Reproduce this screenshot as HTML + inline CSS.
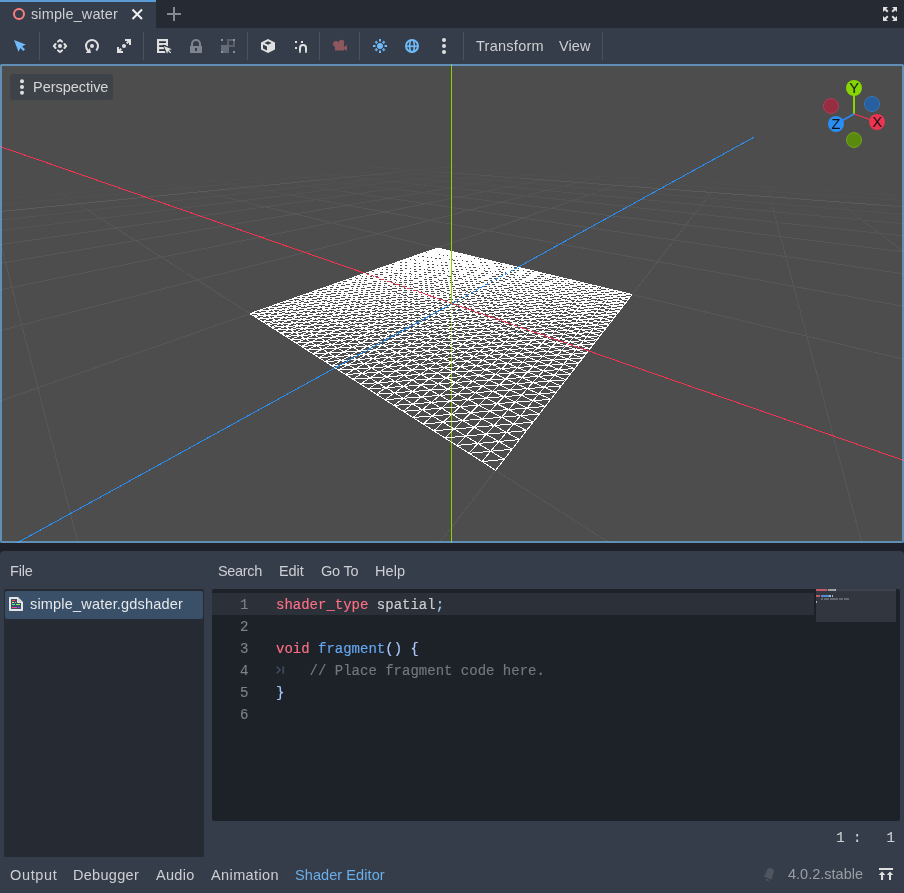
<!DOCTYPE html>
<html><head><meta charset="utf-8">
<style>
html,body{margin:0;padding:0;}
body{width:904px;height:893px;overflow:hidden;background:#1f222a;position:relative;font-family:"Liberation Sans",sans-serif;font-size:15px;color:#cdcfd2;}
.abs{position:absolute;}
.t{position:absolute;will-change:transform;white-space:nowrap;line-height:20px;height:20px;}
#tabbar{left:0;top:0;width:904px;height:28px;background:#252a33;}
#tab{left:0;top:0;width:156px;height:28px;background:#363d4a;border-top:2px solid #5b9bd6;box-sizing:border-box;}
#toolbar{left:0;top:28px;width:904px;height:36px;background:#363d4a;}
.sep{position:absolute;top:32px;width:1px;height:28px;background:#4b515d;}
#vp{left:0;top:64px;width:904px;height:479px;background:#4d4d4d;overflow:hidden;}
#vpborder{left:0;top:64px;width:904px;height:479px;box-sizing:border-box;border:2px solid rgba(112,186,250,0.6);border-radius:2px;}
#split{left:0;top:543px;width:904px;height:8px;background:#1f222a;}
#bottom{left:0;top:551px;width:904px;height:342px;background:#363d4a;border-radius:4px 4px 0 0;}
#flist{left:4px;top:589px;width:200px;height:268px;background:#252a33;border-radius:2px;}
#fsel{left:5px;top:591px;width:198px;height:28px;background:#3a5069;border-radius:2px;}
#code{left:212px;top:589px;width:688px;height:232px;background:#1d2229;border-radius:2px;overflow:hidden;}
#curline{left:212px;top:593px;width:602px;height:22px;background:#2c3039;}
#minimap{left:816px;top:589px;width:80px;height:33px;background:#32363e;}
.mono{-webkit-text-stroke:0.15px;will-change:transform;position:absolute;left:0;top:0;width:904px;height:893px;font-family:"Liberation Mono",monospace;font-size:14px;}
.ln{position:absolute;left:212.5px;width:36px;text-align:right;color:#7d8187;line-height:22px;height:22px;}
.cl{position:absolute;left:276px;line-height:22px;height:22px;white-space:pre;color:#cdcfd2;}
.kw{color:#ff7085;}
.fn{color:#66a8f0;}
.sym{color:#abc9ff;}
.cm{color:#75787d;}
</style></head><body>
<div id="tabbar" class="abs"></div>
<div id="tab" class="abs"></div>
<svg class="abs" style="left:11px;top:6px" width="16" height="16" viewBox="0 0 16 16"><circle cx="8" cy="8" r="5" fill="none" stroke="#fc7f7f" stroke-width="2"/></svg>
<svg class="abs" style="left:129px;top:6px" width="16" height="16" viewBox="0 0 16 16"><path d="M3.5 3.5l9.5 9.5M13 3.5l-9.500 9.500" fill="none" stroke="#f0f0f1" stroke-width="2"/></svg>
<svg class="abs" style="left:166px;top:6px" width="16" height="16" viewBox="0 0 16 16"><path d="M8 1v14M1 8h14" fill="none" stroke="#87898e" stroke-width="2"/></svg>
<svg class="abs" style="left:882px;top:6px" width="16" height="16" viewBox="0 0 16 16"><path fill="#e0e0e0" d="M1 1v5l1.793-1.793L5.086 6.500 6.500 5.086 4.207 2.793 6 1zm9 0 1.793 1.793L9.500 5.086 10.914 6.500l2.293-2.293L15 6V1zM5.086 9.500l-2.293 2.293L1 10v5h5l-1.793-1.793L6.500 10.914zm5.828 0L9.500 10.914l2.293 2.293L10 15h5v-5l-1.793 1.793z"/></svg>

<div id="toolbar" class="abs"></div>
<div class="sep" style="left:39px"></div>
<div class="sep" style="left:143px"></div>
<div class="sep" style="left:247px"></div>
<div class="sep" style="left:319px"></div>
<div class="sep" style="left:359px"></div>
<div class="sep" style="left:463px"></div>
<div class="sep" style="left:602px"></div>
<!-- select -->
<svg class="abs" style="left:12px;top:38px" width="16" height="16" viewBox="0 0 16 16"><path fill="#70bafa" d="M2 2L13.700 6.500 10.100 8.400 13 11.300 11.300 13 8.400 10.100 6.500 13.700z"/></svg>
<!-- move -->
<svg class="abs" style="left:52px;top:38px" width="16" height="16" viewBox="0 0 16 16"><path fill="none" stroke="#e0e0e0" stroke-width="2" stroke-linecap="round" stroke-linejoin="round" d="M6 3.600L8 1.900 10 3.600M6 12.400L8 14.100 10 12.400M3.600 6L1.900 8 3.600 10M12.400 6L14.100 8 12.400 10"/><circle cx="8" cy="8" r="2.100" fill="#e0e0e0"/></svg>
<!-- rotate -->
<svg class="abs" style="left:84px;top:38px" width="16" height="16" viewBox="0 0 16 16"><path fill="none" stroke="#e0e0e0" stroke-width="2" stroke-linecap="round" d="M12.660 11.780A6 6 0 1 0 3.760 12.240"/><path fill="#e0e0e0" d="M1.700 15h5.300l-1.100-5z"/><circle cx="8" cy="8" r="2" fill="#e0e0e0"/></svg>
<!-- scale -->
<svg class="abs" style="left:116px;top:38px" width="16" height="16" viewBox="0 0 16 16"><path fill="#e0e0e0" d="M9 1v2h2.586L10 4.586 11.414 6 13 4.414V7h2V1zM4.586 10L3 11.586V9H1v6h6v-2H4.414L6 11.414z"/><circle cx="8" cy="8" r="2" fill="#e0e0e0"/></svg>
<!-- list select -->
<svg class="abs" style="left:156px;top:38px" width="16" height="16" viewBox="0 0 16 16"><path fill="#e0e0e0" d="M1 1H12V8.300L6.600 6.500 9.500 15H1z"/><path fill="#272d39" d="M3.100 3.200h6.800v1.700H3.100zM3.100 7.200h6.900v1.700H3.100zM3.100 11.200h6.900v1.700H3.100z"/><path fill="#e0e0e0" d="M7.800 8L15.900 11.300 12.900 12.100 15.200 14.400 14.300 15.300 12 13 11.200 15.800z"/></svg>
<!-- lock -->
<svg class="abs" style="left:188px;top:38px" width="16" height="16" viewBox="0 0 16 16"><path fill="#7f848e" d="M8 1a5 5 0 0 0-5 5v2H2v7h12V8h-1V6a5 5 0 0 0-5-5zm0 2a3 3 0 0 1 3 3v2H5V6a3 3 0 0 1 3-3zM7 10h2v3H7z"/></svg>
<!-- group -->
<svg class="abs" style="left:220px;top:38px" width="16" height="16" viewBox="0 0 16 16"><g fill="#666b75"><path d="M1 7h8v8H1z"/><path d="M7 1v6h2V3h4v4H9v2h6V1z" fill="#5b606b"/></g><g fill="#8c9099"><path d="M1 1h2v2H1zM13 1h2v2h-2zM1 13h2v2H1zM13 13h2v2h-2z"/></g></svg>
<!-- cube -->
<svg class="abs" style="left:260px;top:38px" width="16" height="16" viewBox="0 0 16 16"><path fill="#e0e0e0" d="M8 1L1 4.500v7L8 15l7-3.500v-7zM8 3.200l3.600 1.800L8 6.800 4.400 5zM3 6.500l4 2v4l-4-2z"/></svg>
<!-- snap -->
<svg class="abs" style="left:292px;top:38px" width="16" height="16" viewBox="0 0 16 16"><g fill="#e0e0e0"><path d="M3 3h2v2H3zM9 3h2v2H9zM3 9h2v2H3z"/><path d="M7 15v-5a4 4 0 0 1 8 0v5h-2v-5a2 2 0 0 0-4 0v5z"/></g><path fill="#a8acb3" d="M7 13.500h2V15H7zM13 13.500h2V15h-2z"/></svg>
<!-- camera -->
<svg class="abs" style="left:332px;top:38px" width="16" height="16" viewBox="0 0 16 16"><g fill="#8c575d"><circle cx="4" cy="6" r="3"/><circle cx="9.500" cy="4.500" r="2.700"/><path d="M3 6h9v6.500H3z"/><path d="M11.500 9.300L15 7v6l-3.500-2.300z"/></g></svg>
<!-- sun -->
<svg class="abs" style="left:372px;top:38px" width="16" height="16" viewBox="0 0 16 16"><g fill="#70bafa"><circle cx="8" cy="8" r="3"/><path d="M7 1h2v2.500H7zM7 12.500h2V15H7zM1 7h2.500v2H1zM12.500 7H15v2h-2.500z"/><path d="M4.300 2.800l.4 1.100 1.100.4-1.100.4-.4 1.100-.4-1.100-1.100-.4 1.100-.4zM11.700 2.800l.4 1.100 1.100.4-1.100.4-.4 1.100-.4-1.100-1.100-.4 1.100-.4zM4.300 10.200l.4 1.100 1.100.4-1.100.4-.4 1.100-.4-1.100-1.100-.4 1.100-.4zM11.700 10.200l.4 1.100 1.100.4-1.100.4-.4 1.100-.4-1.100-1.100-.4 1.100-.4z" stroke="#70bafa" stroke-width=".6"/></g></svg>
<!-- globe -->
<svg class="abs" style="left:404px;top:38px" width="16" height="16" viewBox="0 0 16 16"><g fill="none" stroke="#70bafa"><circle cx="8" cy="8" r="6" stroke-width="2"/><ellipse cx="8" cy="8" rx="2.300" ry="6" stroke-width="1.700"/><path d="M2 8.300h12" stroke-width="1.700"/></g></svg>
<!-- dots -->
<svg class="abs" style="left:436px;top:38px" width="16" height="16" viewBox="0 0 16 16"><g fill="#e0e0e0"><circle cx="8" cy="2" r="2"/><circle cx="8" cy="8" r="2"/><circle cx="8" cy="14" r="2"/></g></svg>

<div id="vp" class="abs">
<svg width="904" height="479" viewBox="0 0 904 479" style="position:absolute;left:0;top:0" shape-rendering="crispEdges" fill="none" stroke-width="1">
<path stroke="rgb(97,97,97)" stroke-opacity="0.056" d="M132.2 111.1L122.1 111.8L111.7 112.4L101 113L89.9 113.7L78.4 114.4L66.5 115.1L54.2 115.9L41.4 116.7L28.2 117.5L14.4 118.3L0.1 119.2L-2 119.3M250.4 106L243.4 106.5L236.2 106.9L228.7 107.4L221.1 107.9L213.2 108.4L205.1 109L196.7 109.5L188.1 110.1L179.2 110.6L170 111.2L160.5 111.9L150.8 112.5L140.6 113.2L130.2 113.8L119.4 114.5L108.1 115.3L96.5 116L84.5 116.8L72 117.6L59.1 118.5L45.6 119.4L31.6 120.3L17.1 121.2L1.9 122.2L-2 122.5M579.9 103.7L586.1 104L592.4 104.3L598.9 104.6L605.5 104.9L612.3 105.3L619.2 105.6L626.3 106L633.5 106.3L640.9 106.7L648.4 107.1L656.1 107.5L664 107.9L672.1 108.3L680.4 108.7L688.8 109.1L697.5 109.6L706.4 110L715.5 110.5L724.8 110.9L734.4 111.4L744.2 111.9L754.3 112.4L764.6 112.9L775.3 113.5L786.2 114L797.4 114.6L808.9 115.2L820.8 115.8L833 116.4L845.5 117L858.4 117.6L871.7 118.3L885.5 119L899.6 119.7L906 120M313.8 104L308.1 104.4L302.2 104.8L296.1 105.2L289.8 105.6L283.4 106.1L276.9 106.5L270.1 107L263.1 107.5L255.9 108L248.6 108.5L241 109.1L233.1 109.6L225 110.2L216.7 110.8L208.1 111.4L199.2 112L190 112.6L180.5 113.3L170.7 114L160.6 114.7L150.1 115.4L139.2 116.2L127.9 117L116.2 117.8L104 118.6L91.4 119.5L78.2 120.4L64.6 121.4L50.3 122.4L35.5 123.4L20.1 124.5L3.9 125.6L-2 126M518 102.5L523.4 102.8L528.9 103.1L534.4 103.4L540.1 103.7L546 104L551.9 104.3L558 104.6L564.1 105L570.5 105.3L576.9 105.6L583.5 106L590.3 106.4L597.2 106.7L604.2 107.1L611.4 107.5L618.8 107.9L626.4 108.3L634.1 108.7L642 109.1L650.1 109.6L658.4 110L667 110.5L675.7 111L684.6 111.4L693.8 111.9L703.2 112.4L712.9 113L722.8 113.5L733.1 114L743.5 114.6L754.3 115.2L765.4 115.8L776.8 116.4L788.5 117L800.6 117.7L813.1 118.3L825.9 119L839.1 119.7L852.8 120.5L866.8 121.2L881.4 122L896.4 122.8L906 123.3M360.2 102.9L355.2 103.3L350.1 103.6L344.9 104L339.6 104.4L334 104.9L328.4 105.3L322.6 105.7L316.6 106.2L310.5 106.6L304.2 107.1L297.7 107.6L291 108.1L284.1 108.6L277 109.2L269.7 109.7L262.2 110.3L254.4 110.9L246.4 111.5L238.1 112.1L229.5 112.7L220.7 113.4L211.5 114.1L202.1 114.8L192.2 115.5L182.1 116.3L171.5 117.1L160.6 117.9L149.3 118.8M470.1 101.9L474.9 102.2L479.8 102.5L484.8 102.8L489.9 103.1L495.1 103.4L500.4 103.7L505.8 104L511.3 104.3L517 104.6L522.7 105L528.6 105.3L534.6 105.7L540.8 106L547 106.4L553.5 106.7L560 107.1L566.7 107.5L573.6 107.9L580.6 108.3L587.8 108.7L595.2 109.2L602.7 109.6L610.5 110L618.4 110.5L626.5 111L634.8 111.4L643.4 111.9L652.1 112.4L661.1 113L670.4 113.5L679.9 114.1L689.6 114.6L699.7 115.2L710 115.8L720.6 116.4L731.5 117L742.7 117.7L754.3 118.4L766.3 119L778.6 119.8L791.3 120.5L804.4 121.3L817.9 122L831.9 122.8L846.3 123.7L861.3 124.5L876.7 125.4L892.7 126.4L906 127.1M399.2 102.2L394.8 102.6L390.3 102.9L385.7 103.3L381 103.7L376.2 104.1L371.2 104.5L366.1 104.9L360.9 105.4L355.5 105.8L349.9 106.2L344.3 106.7L338.4 107.2L332.4 107.7L326.2 108.2L319.8 108.7L313.3 109.2L306.5 109.8L299.5 110.4L292.3 111L284.9 111.6L277.2 112.2M432.6 101.9L437.1 102.2L441.6 102.5L446.2 102.8L450.9 103.1L455.7 103.4L460.6 103.7L465.6 104L470.7 104.3L476 104.6L481.3 105L486.7 105.3L492.3 105.7L498 106L503.8 106.4L509.7 106.8L515.8 107.1L522 107.5L528.3 107.9L534.8 108.3L541.5 108.7L548.3 109.2L555.3 109.6L562.4 110.1M432.6 101.9L428.7 102.3L424.7 102.6L420.5 103L416.3 103.4L412 103.8L407.5 104.2L403 104.6L398.3 105L393.5 105.4L388.5 105.9L383.4 106.3L378.2 106.8L372.8 107.3L367.3 107.8L361.6 108.3L355.8 108.8L349.7 109.3L343.5 109.9M399.2 102.2L403.3 102.5L407.6 102.8L411.9 103.1L416.3 103.4L420.8 103.7L425.4 104L430.1 104.3L434.9 104.7L439.8 105L444.8 105.3L449.9 105.7L455.1 106L460.5 106.4L465.9 106.8L471.5 107.1L477.2 107.5L483 107.9L489 108.3L495.1 108.8M491.3 102.1L488.1 102.4L484.8 102.8L481.4 103.1L478 103.5L474.4 103.9L470.7 104.3L467 104.7L463.1 105.2L459.2 105.6L455.1 106L450.9 106.5L446.6 107L442.2 107.5L437.7 108L433 108.5M337.4 103.4L341.1 103.7L344.9 104L348.8 104.4L352.7 104.7L356.7 105L360.9 105.4L365.1 105.7L369.3 106.1L373.7 106.4L378.2 106.8L382.8 107.2L387.5 107.6L392.3 108L397.2 108.4L402.2 108.8M518 102.5L515.1 102.8L512.1 103.2L509 103.6L505.8 104L502.6 104.4L499.2 104.8L495.8 105.2L492.3 105.7L488.7 106.1L484.9 106.6L481.1 107.1L477.2 107.5L473.1 108L469 108.6M304.6 104L308.1 104.4L311.6 104.7L315.2 105L318.8 105.4L322.6 105.7L326.4 106.1L330.3 106.4L334.3 106.8L338.4 107.2L342.6 107.6L346.9 108L351.3 108.4L355.8 108.8L360.4 109.2L365.1 109.7M545.5 102.9L542.8 103.3L540.1 103.7L537.4 104.1L534.5 104.5L531.6 104.9L528.6 105.3L525.5 105.7L522.4 106.2L519.1 106.7L515.8 107.1L512.3 107.6L508.8 108.1L505.1 108.7M273.6 105L276.8 105.4L280.1 105.7L283.4 106.1L286.9 106.5L290.4 106.8L294 107.2L297.7 107.6L301.4 108L305.3 108.4L309.2 108.8L313.3 109.2L317.4 109.7L321.6 110.1L326 110.6M573.8 103.3L571.4 103.7L569.1 104.1L566.6 104.5L564.1 105L561.6 105.4L558.9 105.8L556.2 106.3L553.5 106.7L550.6 107.2L547.6 107.7L544.6 108.2L541.5 108.7L538.3 109.3M240.4 106.1L243.4 106.5L246.4 106.8L249.5 107.2L252.7 107.6L255.9 108L259.3 108.4L262.7 108.8L266.1 109.3L269.7 109.7L273.4 110.2L277.1 110.6L280.9 111.1L284.9 111.6M600.9 104.2L598.9 104.6L596.8 105L594.7 105.5L592.5 105.9L590.3 106.4L588 106.8L585.6 107.3L583.1 107.8L580.6 108.3L578 108.8L575.3 109.4L572.6 109.9L569.8 110.5M207.7 107.6L210.4 108L213.2 108.4L216.1 108.9L219 109.3L222 109.7L225 110.2L228.2 110.6L231.4 111.1L234.7 111.6L238.1 112.1L241.6 112.6L245.1 113.1L248.8 113.7M629.7 105.1L628 105.5L626.3 106L624.5 106.4L622.6 106.9L620.8 107.4L618.8 107.9L616.8 108.4L614.8 108.9L612.6 109.5L610.5 110L608.2 110.6L605.9 111.2M171.8 109.3L174.2 109.7L176.7 110.2L179.2 110.6L181.8 111.1L184.5 111.6L187.2 112.1L190 112.6L192.9 113.1L195.9 113.7L198.9 114.2L202.1 114.8L205.3 115.4M660.2 106.1L658.9 106.5L657.5 107L656.1 107.5L654.7 108L653.2 108.5L651.7 109L650.1 109.6L648.5 110.1L646.9 110.7L645.1 111.3L643.4 111.9L641.5 112.6M132.2 111.1L134.2 111.6L136.3 112.1L138.4 112.6L140.6 113.2L142.9 113.7L145.2 114.3L147.6 114.8L150.1 115.4L152.6 116L155.2 116.6L157.9 117.3L160.6 117.9M726.2 109.2L725.7 109.8L725.3 110.3L724.8 110.9L724.4 111.5L723.9 112.2L723.4 112.8L722.8 113.5L722.3 114.2L721.8 114.9L721.2 115.6L720.6 116.4M40.4 116.1L41.4 116.7L42.4 117.3L43.4 118L44.5 118.7L45.6 119.4L46.7 120.1L47.9 120.8L49.1 121.6L50.3 122.4L51.6 123.2L53 124L54.3 124.9M764.1 111L764.3 111.7L764.5 112.3L764.6 112.9L764.8 113.6L765 114.3L765.2 115L765.4 115.8L765.6 116.5L765.8 117.4L766 118.2L766.3 119M806.2 113.1L807.1 113.7L808 114.4L808.9 115.2L809.9 115.9L810.9 116.7L812 117.5L813.1 118.3L814.2 119.2L815.4 120.1L816.6 121.1L817.9 122L819.2 123.1M852.9 115.3L854.7 116L856.5 116.8L858.4 117.6L860.4 118.5L862.5 119.4L864.6 120.3L866.8 121.2L869.2 122.2L871.6 123.2L874.1 124.3L876.7 125.4L879.5 126.6"/>
<path stroke="rgb(97,97,97)" stroke-opacity="0.112" d="M149.3 118.8L137.5 119.7L125.2 120.6L112.4 121.6L99.2 122.6L85.3 123.6L70.9 124.7L55.8 125.8L40 127L23.5 128.3L6.2 129.6L-2 130.2M277.2 112.2L269.3 112.8L261.1 113.5L252.6 114.2L243.8 114.9L234.7 115.7L225.3 116.4L215.5 117.2L205.4 118.1L194.8 118.9L183.9 119.8L172.5 120.8L160.7 121.7L148.3 122.7L135.5 123.8L122 124.9L108 126L93.4 127.2L78 128.5L62 129.8L45.2 131.2L27.5 132.6L8.9 134.1L-2 135M562.4 110.1L569.8 110.5L577.3 111L585 111.5L592.9 112L601 112.5L609.3 113L617.9 113.5L626.6 114.1L635.7 114.6L644.9 115.2L654.5 115.8L664.3 116.4L674.4 117.1L684.8 117.7L695.5 118.4L706.6 119.1L718 119.8L729.7 120.5L741.8 121.3L754.3 122.1L767.3 122.9L780.6 123.7L794.5 124.6L808.8 125.5L823.6 126.4L838.9 127.4L854.9 128.4L871.4 129.4L888.5 130.5L906 131.6M343.5 109.9L337.1 110.5L330.4 111.1L323.6 111.7L316.5 112.3L309.2 113L301.7 113.6L293.9 114.3L285.8 115.1L277.4 115.8L268.7 116.6L259.7 117.4L250.4 118.2L240.7 119.1L230.6 120M495.1 108.8L501.4 109.2L507.8 109.6L514.4 110.1L521.1 110.5L528 111L535.1 111.5L542.3 112L549.8 112.5L557.4 113L565.3 113.5L573.4 114.1L581.7 114.7L590.2 115.2L598.9 115.8L608 116.5L617.3 117.1M902.8 136.5L906 136.8M433 108.5L428.2 109L423.2 109.5L418.1 110.1L412.8 110.7L407.3 111.3L401.7 111.9L395.9 112.5L389.9 113.2L383.7 113.9M402.2 108.8L407.4 109.2L412.7 109.7L418.1 110.1L423.6 110.6L429.3 111L435.1 111.5L441.1 112L447.2 112.5L453.5 113M469 108.6L464.7 109.1L460.2 109.6L455.7 110.2L451 110.8L446.1 111.4L441.1 112L435.9 112.7L430.6 113.3M365.1 109.7L369.9 110.1L374.8 110.6L379.9 111.1L385.1 111.5L390.4 112L395.9 112.5L401.5 113.1L407.3 113.6M505.1 108.7L501.4 109.2L497.5 109.7L493.5 110.3L489.4 110.9L485.1 111.5L480.7 112.1L476.2 112.8L471.5 113.4M326 110.6L330.4 111.1L335 111.6L339.7 112.1L344.5 112.6L349.4 113.1L354.5 113.6L359.7 114.2M538.3 109.3L534.9 109.8L531.5 110.4L528 111L524.3 111.6L520.6 112.2L516.7 112.9L512.7 113.6M284.9 111.6L288.9 112.1L293.1 112.6L297.3 113.1L301.7 113.6L306.2 114.2L310.8 114.8L315.5 115.3L320.4 115.9M569.8 110.5L566.8 111.1L563.8 111.7L560.7 112.4L557.4 113L554.1 113.7L550.6 114.4M248.8 113.7L252.6 114.2L256.4 114.8L260.4 115.4L264.5 116L268.7 116.6L273.1 117.2L277.5 117.9M605.9 111.2L603.5 111.8L601 112.5L598.4 113.1L595.8 113.8L593 114.5L590.2 115.2L587.2 116M205.3 115.4L208.6 116L212 116.6L215.5 117.2L219.1 117.9L222.8 118.6L226.7 119.3L230.6 120M641.5 112.6L639.6 113.2L637.7 113.9L635.7 114.6L633.6 115.4L631.4 116.1L629.1 116.9L626.8 117.7M160.6 117.9L163.4 118.6L166.4 119.3L169.4 120L172.5 120.8L175.7 121.5L179 122.3L182.4 123.1M720.6 116.4L720 117.2L719.3 118L718.7 118.9L718 119.8L717.2 120.7L716.5 121.7L715.7 122.7M54.3 124.9L55.8 125.8L57.2 126.8L58.8 127.7L60.3 128.8L62 129.8L63.7 130.9M766.3 119L766.5 119.9L766.8 120.9L767 121.9L767.3 122.9L767.6 123.9L767.9 125L768.2 126.2M819.2 123.1L820.6 124.1L822.1 125.2L823.6 126.4L825.2 127.6L826.8 128.9L828.6 130.2M879.5 126.6L882.3 127.8L885.4 129.1L888.5 130.5L891.8 131.9L895.3 133.3L899 134.9L902.8 136.5"/>
<path stroke="rgb(97,97,97)" stroke-opacity="0.168" d="M230.6 120L220.1 120.9L209.2 121.9L197.8 122.9L186 124L173.6 125.1L160.7 126.2L147.2 127.5L133.1 128.7L118.2 130L102.7 131.4L86.4 132.9L69.2 134.4L51.2 136L32.2 137.7L12.1 139.5L-2 140.8M617.3 117.1L626.8 117.7L636.7 118.4L646.8 119.1L657.3 119.8L668.1 120.5L679.2 121.3L690.7 122.1L702.6 122.9L714.9 123.7L727.6 124.6L740.8 125.5L754.4 126.4L768.5 127.4L783.1 128.4L798.3 129.4L814 130.5L830.4 131.6L847.4 132.8L865.1 134L883.6 135.2L902.8 136.5M383.7 113.9L377.2 114.6L370.6 115.3L363.7 116.1L356.5 116.9L349.1 117.7L341.4 118.5L333.4 119.4L325.1 120.3M453.5 113L460 113.6L466.6 114.1L473.5 114.7L480.5 115.3L487.7 115.9L495.1 116.5L502.8 117.1L510.6 117.8L518.7 118.5M430.6 113.3L425 114L419.3 114.7L413.4 115.5L407.2 116.2L400.8 117L394.2 117.8M407.3 113.6L413.2 114.2L419.3 114.7L425.6 115.3L432 115.9L438.6 116.5L445.4 117.2L452.5 117.8M471.5 113.4L466.6 114.1L461.6 114.8L456.4 115.6L451 116.4L445.4 117.2M359.7 114.2L365.1 114.7L370.6 115.3L376.2 115.9L382 116.5L388 117.2L394.2 117.8M512.7 113.6L508.5 114.3L504.2 115L499.7 115.7L495.1 116.5L490.3 117.3L485.4 118.1M320.4 115.9L325.4 116.6L330.6 117.2L335.9 117.9L341.4 118.5L347 119.2M550.6 114.4L547.1 115.1L543.4 115.9L539.5 116.6L535.5 117.4L531.4 118.3M277.5 117.9L282.1 118.6L286.9 119.3L291.8 120L296.8 120.7L302 121.5M587.2 116L584.2 116.8L581 117.6L577.7 118.4L574.3 119.3L570.8 120.2M230.6 120L234.7 120.7L238.9 121.5L243.2 122.3L247.7 123.1L252.4 124M626.8 117.7L624.4 118.6L621.9 119.5L619.3 120.4L616.5 121.3M182.4 123.1L186 124L189.7 124.9L193.4 125.8L197.4 126.7M715.7 122.7L714.9 123.7L714 124.8L713.2 126L712.2 127.2M63.7 130.9L65.5 132L67.3 133.2L69.2 134.4L71.2 135.7L73.3 137M768.2 126.2L768.5 127.4L768.8 128.7L769.2 130L769.5 131.4M828.6 130.2L830.4 131.6L832.3 133.1L834.3 134.6L836.5 136.2L838.7 138M902.8 136.5L906 137.9"/>
<path stroke="rgb(97,97,97)" stroke-opacity="0.224" d="M325.1 120.3L316.4 121.3L307.4 122.3L298 123.3L288.2 124.4L278 125.5L267.3 126.7L256.1 127.9M518.7 118.5L527.1 119.2L535.7 119.9L544.6 120.6L553.8 121.4L563.2 122.1L573 123L583.1 123.8L593.6 124.7L604.4 125.6M394.2 117.8L387.3 118.7L380.2 119.6L372.8 120.5L365.1 121.4L357 122.4L348.6 123.5M452.5 117.8L459.7 118.5L467.1 119.2L474.8 119.9L482.8 120.6L490.9 121.4L499.4 122.2M445.4 117.2L439.6 118L433.6 118.8L427.4 119.7L420.8 120.7L414.1 121.6M394.2 117.8L400.6 118.5L407.1 119.2L413.9 119.9L420.8 120.7L428 121.4M485.4 118.1L480.2 119L474.8 119.9L469.2 120.8L463.4 121.8M347 119.2L352.9 119.9L358.9 120.7L365.1 121.4L371.5 122.2M531.4 118.3L527.1 119.2L522.6 120.1L518 121L513.2 122M302 121.5L307.4 122.3L313 123.1L318.7 123.9L324.6 124.8M570.8 120.2L567.1 121.2L563.2 122.1L559.2 123.2M252.4 124L257.2 124.8L262.2 125.7L267.3 126.7M616.5 121.3L613.7 122.3L610.7 123.4L607.7 124.4L604.4 125.6M197.4 126.7L201.4 127.7L205.7 128.7L210 129.7L214.6 130.8M712.2 127.2L711.3 128.4L710.2 129.7L709.2 131.1L708.1 132.6M73.3 137L75.5 138.4L77.8 139.9L80.2 141.4M769.5 131.4L769.9 132.8L770.3 134.3L770.8 136L771.2 137.7M838.7 138L841.1 139.8L843.6 141.7L846.2 143.7"/>
<path stroke="rgb(97,97,97)" stroke-opacity="0.280" d="M256.1 127.9L244.4 129.2L232.2 130.5L219.3 131.9L205.8 133.4L191.6 135L176.6 136.6L160.8 138.4L144.2 140.2L126.5 142.1L107.8 144.2L88 146.4L66.9 148.7L44.4 151.2M604.4 125.6L615.7 126.5L627.3 127.5L639.3 128.5L651.8 129.5L664.8 130.6L678.3 131.7L692.3 132.9L706.9 134.1L722.1 135.3L737.9 136.6L754.4 138L771.7 139.4L789.7 140.9L808.6 142.5L828.3 144.1L849 145.9L870.8 147.7L893.6 149.6L906 150.6M348.6 123.5L339.9 124.6L330.8 125.7L321.3 126.9L311.3 128.1L300.8 129.4M499.4 122.2L508.1 123L517.2 123.8L526.5 124.7L536.2 125.6L546.2 126.5L556.5 127.5M414.1 121.6L407 122.6L399.7 123.7L392 124.8L384 125.9M428 121.4L435.5 122.2L443.1 123L451.1 123.9L459.3 124.7L467.8 125.6M463.4 121.8L457.4 122.8L451.1 123.9L444.5 125M371.5 122.2L378.1 123.1L384.9 123.9L392 124.8L399.3 125.7M513.2 122L508.1 123L502.9 124.1L497.4 125.2M324.6 124.8L330.8 125.7L337.2 126.6L343.8 127.6M559.2 123.2L555.1 124.2L550.7 125.4L546.2 126.5M267.3 126.7L272.6 127.6L278.2 128.6L283.9 129.7L289.9 130.8M604.4 125.6L601.1 126.7L597.6 128L593.9 129.3M214.6 130.8L219.3 131.9L224.2 133.1L229.3 134.3M708.1 132.6L706.9 134.1L705.6 135.7M80.2 141.4L82.6 143L85.2 144.6L88 146.4M771.2 137.7L771.7 139.4L772.2 141.3L772.7 143.3M846.2 143.7L849 145.9L852 148.1L855.2 150.6"/>
<path stroke="rgb(97,97,97)" stroke-opacity="0.336" d="M44.4 151.2L20.4 153.8L-2 156.3M300.8 129.4L289.9 130.8L278.4 132.2L266.3 133.7L253.6 135.3L240.2 136.9L226.1 138.7M556.5 127.5L567.3 128.5L578.4 129.5L590 130.6L602.1 131.7L614.6 132.9L627.6 134.1L641.1 135.4L655.3 136.7L670 138.1L685.4 139.5L701.5 141M773.9 147.7L794.3 149.6L815.7 151.6L838.3 153.7L862.2 156L887.4 158.3L906 160M384 125.9L375.6 127.1L366.9 128.3L357.7 129.7L348.1 131M467.8 125.6L476.6 126.6L485.7 127.5L495.1 128.5L505 129.6M444.5 125L437.6 126.1L430.4 127.3L422.9 128.6L415 129.9M399.3 125.7L406.9 126.6L414.8 127.6L422.9 128.6L431.4 129.6M497.4 125.2L491.7 126.3L485.7 127.5L479.4 128.8M343.8 127.6L350.6 128.6L357.7 129.7L365.1 130.7M546.2 126.5L541.4 127.8L536.4 129L531.2 130.4M289.9 130.8L296.1 131.9L302.5 133.1M593.9 129.3L590 130.6L586 132M229.3 134.3L234.7 135.6L240.2 136.9L246 138.3M705.6 135.7L704.3 137.3L703 139.1L701.5 141M88 146.4L90.8 148.2L93.9 150.1L97 152.1M772.7 143.3L773.3 145.5L773.9 147.7M855.2 150.6L858.6 153.2L862.2 156L866.1 158.9"/>
<path stroke="rgb(97,97,97)" stroke-opacity="0.392" d="M226.1 138.7L211.2 140.5L195.4 142.5L178.7 144.6L160.9 146.8L142 149.1L121.9 151.6L100.4 154.3L77.4 157.1L52.7 160.2L26.1 163.5L-2 167M701.5 141L718.3 142.6L736 144.2L754.5 145.9L773.9 147.7M348.1 131L338 132.5L327.4 134L316.2 135.6L304.4 137.2L292 139M505 129.6L515.1 130.7L525.7 131.8L536.7 132.9L548.2 134.2L560.1 135.4L572.5 136.7M415 129.9L406.8 131.3L398.1 132.7L389 134.2M431.4 129.6L440.2 130.7L449.3 131.8L458.8 133M479.4 128.8L472.9 130.1L466 131.5L458.8 133M365.1 130.7L372.7 131.9L380.7 133L389 134.2M531.2 130.4L525.7 131.8L520 133.3L513.9 134.8M302.5 133.1L309.2 134.3L316.2 135.6L323.5 136.9M586 132L581.7 133.5L577.2 135.1L572.5 136.7M246 138.3L252.1 139.8L258.4 141.3M701.5 141L700 143L698.3 145.1M97 152.1L100.4 154.3L103.9 156.5M773.9 147.7L774.5 150.1L775.2 152.7M-2 169.3L-1.8 170.1M866.1 158.9L870.3 162.1L874.8 165.6"/>
<path stroke="rgb(97,97,97)" stroke-opacity="0.448" d="M292 139L278.9 140.9L265 142.9L250.3 144.9L234.7 147.2L218 149.5L200.3 152.1M572.5 136.7L585.5 138.1L599 139.5L613.2 141L628 142.6L643.5 144.3L659.8 146L676.8 147.8L694.8 149.7L713.6 151.7L733.5 153.8L754.5 156L776.7 158.4L800.2 160.9L825.1 163.5L851.5 166.3L879.6 169.3L906 172.1M389 134.2L379.4 135.9L369.3 137.5L358.6 139.3L347.3 141.2M458.8 133L468.6 134.2L478.9 135.5L489.6 136.8L500.8 138.2M458.8 133L451.2 134.5L443.2 136.1L434.7 137.9M389 134.2L397.6 135.5L406.6 136.8L416 138.2M513.9 134.8L507.5 136.4L500.8 138.2M323.5 136.9L331.1 138.3L339 139.7L347.3 141.2M572.5 136.7L567.5 138.5L562.3 140.3M258.4 141.3L265 142.9L272 144.5M698.3 145.1L696.6 147.3L694.8 149.7M103.9 156.5L107.7 158.9L111.6 161.4M775.2 152.7L775.9 155.4L776.7 158.4L777.5 161.5M-1.8 170.1L-1 173.3L-0.1 176.8M874.8 165.6L879.6 169.3L884.9 173.3"/>
<path stroke="rgb(97,97,97)" stroke-opacity="0.504" d="M200.3 152.1L181.3 154.8L161 157.7L139.3 160.8L115.8 164.1L90.5 167.7L63.1 171.6L33.3 175.9L0.9 180.5L-2 180.9M347.3 141.2L335.4 143.2L322.7 145.3L309.2 147.6L294.9 150M500.8 138.2L512.5 139.6L524.7 141.1L537.5 142.7L550.8 144.3L564.9 146.1L579.6 147.9L595.1 149.8M434.7 137.9L425.8 139.7L416.4 141.6L406.4 143.6L395.9 145.7M416 138.2L425.8 139.7L436.1 141.2L446.8 142.7L458 144.4M500.8 138.2L493.7 140L486.2 141.9L478.3 143.9M347.3 141.2L356 142.8L365.1 144.4L374.6 146.2M562.3 140.3L556.7 142.3L550.8 144.3L544.6 146.5M272 144.5L279.2 146.2L286.9 148.1L294.9 150M694.8 149.7L692.8 152.2L690.7 154.9L688.4 157.9M111.6 161.4L115.8 164.1L120.3 166.9L125 170M777.5 161.5L778.4 164.9L779.4 168.6M-0.1 176.8L0.9 180.5L1.9 184.4L3 188.7M884.9 173.3L890.6 177.7L896.9 182.5L903.8 187.8"/>
<path stroke="rgb(97,97,97)" stroke-opacity="0.560" d="M294.9 150L279.6 152.5L263.3 155.3L245.8 158.2L227 161.3L206.7 164.7L184.9 168.4L161.2 172.3L135.5 176.6L107.4 181.3L76.7 186.5L42.9 192.1L5.5 198.4L-2 199.6M595.1 149.8L611.4 151.8L628.5 153.9L646.6 156.1L665.8 158.5L686 161L707.5 163.6L730.3 166.4L754.6 169.4L780.5 172.6L808.1 176L837.7 179.7L869.5 183.6L903.8 187.8L906 188.1M395.9 145.7L384.6 148L372.6 150.4L359.9 153L346.2 155.8L331.6 158.7L315.9 161.9L298.9 165.4L280.6 169.1L260.8 173.1L239.2 177.4L215.6 182.2L189.8 187.4L161.4 193.2L130 199.5L95.1 206.6L56 214.5L12 223.4L-2 226.3M458 144.4L469.8 146.1L482.2 147.9L495.2 149.8L508.9 151.8L523.3 154L538.5 156.2L554.6 158.6L571.6 161.1L589.7 163.7L608.8 166.5L629.2 169.5L651 172.7L674.3 176.1L699.2 179.8L725.9 183.7L754.7 187.9L785.7 192.5L819.4 197.4L855.9 202.8L895.8 208.7L906 210.2M478.3 143.9L469.8 146.1L460.9 148.4L451.3 150.9L441.1 153.5L430.2 156.3L418.5 159.3L405.9 162.5L392.4 166L377.7 169.7L361.8 173.8L344.5 178.3L325.6 183.1L304.9 188.4L282.1 194.3L256.9 200.7L228.7 208L197.3 216L161.8 225.1L121.4 235.5L75.2 247.3L21.7 261.1L-2 267.2M374.6 146.2L384.6 148L395.1 149.9L406.2 151.9L417.9 154L430.2 156.3L443.2 158.6L457 161.2L471.6 163.8L487.1 166.6L503.6 169.6L521.2 172.8L540.1 176.3L560.2 179.9L581.9 183.9L605.2 188.1L630.3 192.7L657.6 197.6L687.2 203L719.5 208.9L754.8 215.3L793.7 222.4L836.6 230.2L884.2 238.8L906 242.8M544.6 146.5L537.9 148.8L530.9 151.3L523.3 154L515.2 156.8L506.5 159.8L497.2 163.1L487.1 166.6L476.2 170.4L464.4 174.6L451.5 179.1L437.5 184L422 189.4L405 195.4L386.1 202L365.1 209.3L341.6 217.6L315 226.9L284.7 237.5L250 249.6L209.7 263.7L162.4 280.3L106.1 300L37.9 323.8L-2 337.8M294.9 150L303.3 152L312.2 154.1L321.6 156.4L331.6 158.7L342.1 161.2L353.2 163.9L365.1 166.7L377.7 169.7L391.2 173L405.5 176.4L420.9 180.1L437.5 184L455.3 188.3L474.5 192.8L495.3 197.8L517.9 203.2L542.6 209.1L569.6 215.5L599.3 222.6L632.1 230.5L668.6 239.2L709.3 248.9L755 259.8L806.9 272.2L866.1 286.3L906 295.8M688.4 157.9L686 161L683.4 164.3L680.6 167.9L677.6 171.9L674.3 176.1L670.7 180.8L666.7 185.9L662.4 191.5L657.6 197.6L652.3 204.5L646.3 212.1L639.7 220.7L632.1 230.5L623.5 241.6L613.6 254.4L602 269.3L588.4 286.9L572 307.9L552.2 333.5L527.4 365.5L495.7 406.3L453.8 460.4L437.8 481M125 170L130.1 173.2L135.5 176.6L141.3 180.3L147.5 184.3L154.2 188.6L161.4 193.2L169.3 198.2L177.8 203.6L187.1 209.5L197.3 216L208.5 223.2L220.8 231.1L234.6 239.8L250 249.6L267.2 260.6L286.8 273.1L309.2 287.4L335.1 303.9L365.2 323.1L400.8 345.8L443.5 373L495.7 406.3L561 447.9L612.9 481M779.4 168.6L780.5 172.6L781.6 176.9L782.9 181.6L784.2 186.8L785.7 192.5L787.4 198.8L789.3 205.8L791.3 213.6L793.7 222.4L796.3 232.3L799.3 243.7L802.8 256.9L806.9 272.2L811.7 290.3L817.5 312.1L824.5 338.7L833.3 372L844.7 414.8L859.8 471.9L862.3 481M3 188.7L4.2 193.4L5.5 198.4L6.9 203.8L8.5 209.8L10.1 216.3L12 223.4L14 231.4L16.3 240.2L18.9 250L21.7 261.1L25 273.6L28.7 288L32.9 304.5L37.9 323.8L43.8 346.7L50.9 374.1L59.6 407.6L70.4 449.6L78.5 481M903.8 187.8L906 189.5"/>
<path stroke="rgb(143,143,143)" stroke-opacity="0.056" d="M461.9 102L458.3 102.3L454.7 102.7L450.9 103.1L447.1 103.5L443.1 103.8L439.1 104.2L434.9 104.7L430.6 105.1L426.3 105.5L421.7 106L417.1 106.4L412.3 106.9L407.4 107.4L402.4 107.9L397.2 108.4L391.9 108.9M368.9 102.8L372.9 103.1L376.9 103.4L381 103.7L385.2 104L389.5 104.3L393.8 104.7L398.3 105L402.8 105.3L407.5 105.7L412.3 106L417.1 106.4L422.1 106.8L427.2 107.2L432.4 107.6L437.7 108L443.1 108.4"/>
<path stroke="rgb(143,143,143)" stroke-opacity="0.112" d="M391.9 108.9L386.4 109.4L380.7 110L374.8 110.6L368.8 111.2L362.5 111.8L356.1 112.4L349.4 113.1L342.5 113.8L335.4 114.5L328 115.2L320.4 115.9M443.1 108.4L448.7 108.8L454.4 109.2L460.2 109.6L466.2 110.1L472.4 110.5L478.7 111L485.1 111.5L491.7 112L498.5 112.5L505.5 113L512.7 113.6L520 114.1"/>
<path stroke="rgb(143,143,143)" stroke-opacity="0.168" d="M320.4 115.9L312.5 116.7L304.3 117.5L295.7 118.4L286.9 119.3L277.7 120.2L268.1 121.1L258.1 122.1L247.7 123.1L236.9 124.2L225.6 125.3M520 114.1L527.6 114.7L535.4 115.3L543.4 115.9L551.6 116.5L560 117.1L568.8 117.8L577.7 118.4L587 119.1L596.5 119.8L606.4 120.6L616.5 121.3L627 122.1M877.8 140.9L898.6 142.4L906 143"/>
<path stroke="rgb(143,143,143)" stroke-opacity="0.224" d="M225.6 125.3L213.8 126.5L201.4 127.7L188.5 128.9L175 130.3L160.8 131.7L145.8 133.2L130.1 134.7L113.6 136.3L96.2 138.1L77.8 139.9L58.3 141.8L37.7 143.8L15.8 146L-2 147.7M627 122.1L637.9 122.9L649.1 123.8L660.6 124.6L672.6 125.5L685.1 126.5L697.9 127.4L711.3 128.4L725.1 129.5L739.5 130.5L754.4 131.7L769.9 132.8L786.1 134L802.9 135.3L820.4 136.6L838.7 138L857.8 139.4L877.8 140.9"/>
<path stroke="#f0334f" d="M-2 81.8L906 397.2"/>
<path stroke="#2b8cf0" d="M754 73.2L13.3 481"/>
<path stroke="#86d404" d="M451.5 239V479"/>
<path stroke="#fff" d="M437.5 184L250 249.6M437.5 184L632.1 230.5M441.6 185L254 252.2M433.8 185.3L630.1 233M445.9 186L258.1 254.8M430.2 186.6L628.1 235.7M450.3 187.1L262.3 257.5M426.4 187.9L626 238.4M454.7 188.1L266.7 260.3M422.5 189.2L623.8 241.2M459.2 189.2L271.2 263.2M418.5 190.6L621.5 244.1M463.8 190.3L275.8 266.1M414.5 192L619.2 247.2M468.5 191.4L280.6 269.2M410.3 193.5L616.7 250.3M473.3 192.6L285.6 272.3M406.1 195L614.2 253.6M478.1 193.7L290.7 275.6M401.7 196.5L611.6 256.9M483.1 194.9L296 279M397.2 198.1L608.9 260.4M488.2 196.1L301.4 282.4M392.6 199.7L606.1 264.1M493.3 197.3L307.1 286M387.9 201.3L603.1 267.8M498.6 198.6L312.9 289.8M383.1 203L600.1 271.8M504 199.9L318.9 293.6M378.1 204.8L596.9 275.9M509.5 201.2L325.2 297.6M373 206.6L593.6 280.1M515.1 202.5L331.7 301.7M367.8 208.4L590.1 284.6M520.8 203.9L338.5 306M362.4 210.3L586.5 289.2M526.6 205.3L345.5 310.5M356.9 212.2L582.8 294.1M532.6 206.7L352.7 315.2M351.2 214.2L578.8 299.1M538.7 208.2L360.3 320M345.3 216.3L574.7 304.5M544.9 209.7L368.2 325M339.3 218.4L570.4 310M551.3 211.2L376.4 330.2M333.1 220.5L565.9 315.9M557.8 212.7L384.9 335.7M326.7 222.8L561.1 322M564.5 214.3L393.9 341.4M320.1 225.1L556.1 328.5M571.3 216L403.2 347.3M313.2 227.5L550.8 335.3M578.3 217.6L412.9 353.5M306.2 229.9L545.3 342.5M585.4 219.3L423.1 360M299 232.5L539.4 350M592.7 221.1L433.8 366.8M291.5 235.1L533.2 358.1M600.2 222.9L444.9 373.9M283.7 237.8L526.6 366.6M607.9 224.7L456.7 381.4M275.7 240.6L519.6 375.6M615.8 226.6L469 389.3M267.4 243.5L512.1 385.2M623.8 228.5L482 397.6M258.8 246.5L504.2 395.4M632.1 230.5L495.7 406.3M250 249.6L495.7 406.3M433.8 185.3L441.6 185M430.2 186.6L445.9 186M426.4 187.9L450.3 187.1M422.5 189.2L454.7 188.1M418.5 190.6L459.2 189.2M414.5 192L463.8 190.3M410.3 193.5L468.5 191.4M406.1 195L473.3 192.6M401.7 196.5L478.1 193.7M397.2 198.1L483.1 194.9M392.6 199.7L488.2 196.1M387.9 201.3L493.3 197.3M383.1 203L498.6 198.6M378.1 204.8L504 199.9M373 206.6L509.5 201.2M367.8 208.4L515.1 202.5M362.4 210.3L520.8 203.9M356.9 212.2L526.6 205.3M351.2 214.2L532.6 206.7M345.3 216.3L538.7 208.2M339.3 218.4L544.9 209.7M333.1 220.5L551.3 211.2M326.7 222.8L557.8 212.7M320.1 225.1L564.5 214.3M313.2 227.5L571.3 216M306.2 229.9L578.3 217.6M299 232.5L585.4 219.3M291.5 235.1L592.7 221.1M283.7 237.8L600.2 222.9M275.7 240.6L607.9 224.7M267.4 243.5L615.8 226.6M258.8 246.5L623.8 228.5M250 249.6L632.1 230.5M254 252.2L630.1 233M258.1 254.8L628.1 235.7M262.3 257.5L626 238.4M266.7 260.3L623.8 241.2M271.2 263.2L621.5 244.1M275.8 266.1L619.2 247.2M280.6 269.2L616.7 250.3M285.6 272.3L614.2 253.6M290.7 275.6L611.6 256.9M296 279L608.9 260.4M301.4 282.4L606.1 264.1M307.1 286L603.1 267.8M312.9 289.8L600.1 271.8M318.9 293.6L596.9 275.9M325.2 297.6L593.6 280.1M331.7 301.7L590.1 284.6M338.5 306L586.5 289.2M345.5 310.5L582.8 294.1M352.7 315.2L578.8 299.1M360.3 320L574.7 304.5M368.2 325L570.4 310M376.4 330.2L565.9 315.9M384.9 335.7L561.1 322M393.9 341.4L556.1 328.5M403.2 347.3L550.8 335.3M412.9 353.5L545.3 342.5M423.1 360L539.4 350M433.8 366.8L533.2 358.1M444.9 373.9L526.6 366.6M456.7 381.4L519.6 375.6M469 389.3L512.1 385.2M482 397.6L504.2 395.4"/>
<path stroke="#f0334f" stroke-dasharray="5 1.5" d="M452 239.5L588.4 286.9"/>
<path stroke="#f0334f" stroke-dasharray="3 2.5" d="M452 239.5L365.1 209.3"/>
<path stroke="#2b8cf0" stroke-dasharray="6 1" d="M452 239.5L335.1 303.9"/>
<path stroke="#2b8cf0" stroke-dasharray="3 2.5" d="M452 239.5L517.9 203.2"/>
<path stroke="#86d404" d="M451.5 0V239.5"/>
</svg>
</div>
<div id="vpborder" class="abs"></div>
<div class="abs" style="left:10px;top:74px;width:103px;height:26px;border-radius:3px;background:rgba(54,61,74,0.6)"></div>
<svg class="abs" style="left:14px;top:79px" width="16" height="16" viewBox="0 0 16 16"><g fill="#e0e0e0"><circle cx="8" cy="2.300" r="2"/><circle cx="8" cy="8" r="2"/><circle cx="8" cy="13.800" r="2"/></g></svg>
<svg class="abs" style="left:804px;top:64px" width="100" height="100" viewBox="804 64 100 100">
<g stroke-width="2" stroke-linecap="butt"><path d="M854 114V88" stroke="#87d603"/><path d="M854 114L877 122" stroke="#f53352" stroke-width="1.2"/><path d="M854 114L836 124" stroke="#298cf5" stroke-width="1.5"/></g>
<circle cx="831" cy="106" r="7.500" fill="#962d41" stroke="#b43c53" stroke-width="1"/>
<circle cx="872" cy="104" r="7.500" fill="#27609f" stroke="#3776bb" stroke-width="1"/>
<circle cx="854" cy="140" r="7.500" fill="#598a0e" stroke="#70a220" stroke-width="1"/>
<circle cx="854" cy="88" r="8" fill="#87d603"/>
<circle cx="877" cy="122" r="8" fill="#ec3350"/>
<circle cx="836" cy="124" r="8" fill="#2b8ef5"/>
<g font-family="'Liberation Sans',sans-serif" font-size="14.500" fill="#111" text-anchor="middle"><text x="854" y="93.200">Y</text><text x="877" y="127.200">X</text><text x="836" y="129.200">Z</text></g>
</svg>

<div id="split" class="abs"></div>
<div id="bottom" class="abs"></div>
<div id="flist" class="abs"></div>
<div id="fsel" class="abs"></div>
<div id="code" class="abs"></div>
<div id="curline" class="abs"></div>
<div id="minimap" class="abs"></div>
<svg class="abs" style="left:8px;top:596px" width="16" height="16" viewBox="0 0 16 16"><path fill="#e8e6e3" d="M2 1c-.55 0-1 .45-1 1v12c0 .55.45 1 1 1h12c.55 0 1-.45 1-1V6l-5-5zm1 2h6v3c0 .55.45 1 1 1h3v6H3z"/><path fill="#cfcfcf" d="M10 2.400L13.600 6H10.500a.5.500 0 0 1-.5-.5z"/><path d="M4 4h3v1H4z" fill="#ff4545"/><path d="M4 6h2v1H4z" fill="#ffe345"/><path d="M7 6h1v1H7z" fill="#45d7ff"/><path d="M4 8h3v1H4z" fill="#45ffa2"/><path d="M8 8h4v1H8z" fill="#80ff45"/><path d="M4 11h5v1H4z" fill="#ff4596"/><path d="M10 11h2v1h-2z" fill="#8045ff"/></svg>
<div class="mono">
<div class="ln" style="top:594px">1</div><div class="ln" style="top:616px">2</div><div class="ln" style="top:638px">3</div><div class="ln" style="top:660px">4</div><div class="ln" style="top:682px">5</div><div class="ln" style="top:704px">6</div>
<div class="cl" style="top:594px"><span class="kw">shader_type</span> spatial<span class="sym">;</span></div>
<div class="cl" style="top:638px"><span class="kw">void</span> <span class="fn">fragment</span><span class="sym">()</span> <span class="sym">{</span></div>
<div class="cl" style="top:660px"><span class="cm">    // Place fragment code here.</span></div>
<div class="cl" style="top:682px"><span class="sym">}</span></div>
<div class="cl" style="top:827px;left:auto;right:9px;">1 :   1</div>
</div>
<svg class="abs" style="left:276px;top:666px" width="9" height="8" viewBox="0 0 9 8"><path d="M0.700 0.700L4 4 0.700 7.300" fill="none" stroke="#3c4759" stroke-width="1.700"/><path d="M7.200 0.300V7.700" fill="none" stroke="#3c4759" stroke-width="1.900"/></svg>
<!-- minimap content -->
<svg class="abs" style="left:816px;top:589px" width="80" height="34" viewBox="0 0 80 34" shape-rendering="crispEdges"><rect x="0" y="0" width="80" height="2" fill="#3e424a"/><rect x="0" y="0" width="11" height="2" fill="#c25766"/><rect x="12" y="0" width="7" height="2" fill="#9c9ea3"/><rect x="19" y="0" width="1" height="2" fill="#9db8e6"/><rect x="0" y="6" width="4" height="2" fill="#c25766"/><rect x="5" y="6" width="8" height="2" fill="#4f8fd0"/><rect x="13" y="6" width="2" height="2" fill="#9db8e6"/><rect x="16" y="6" width="1" height="2" fill="#9db8e6"/><rect x="5" y="9" width="2" height="2" fill="#63666c"/><rect x="8" y="9" width="5" height="2" fill="#63666c"/><rect x="14" y="9" width="8" height="2" fill="#63666c"/><rect x="23" y="9" width="4" height="2" fill="#63666c"/><rect x="28" y="9" width="5" height="2" fill="#63666c"/><rect x="0" y="12" width="1" height="2" fill="#9db8e6"/></svg>
<!-- bell -->
<svg class="abs" style="left:762px;top:866px" width="16" height="16" viewBox="0 0 16 16"><path fill="#50555f" d="M9.500 2.200a3.800 3.800 0 0 0-4.800 2.300L3.300 8.800 1.200 10.300l8.500 3.400.3-2.600 1.600-4.200A3.800 3.800 0 0 0 9.500 2.200zM4 12.600a1.700 1.700 0 0 0 3.200 1.300z"/></svg>
<!-- expand -->
<svg class="abs" style="left:878px;top:866px" width="16" height="16" viewBox="0 0 16 16"><path fill="#e0e0e0" d="M1 2h14v2H1zM4.100 5.400L0.800 9H3V14h2.100V9h2.200zM12 5.400L8.800 9H11V14h2V9h2.200z"/></svg>

<div class="t" style="left:30.70px;top:4.00px;color:#cdcfd2;font-size:14.5px;letter-spacing:0.123px;font-family:'Liberation Sans',sans-serif">simple_water</div>
<div class="t" style="left:32.80px;top:77.00px;color:#d6d6d6;font-size:14.5px;letter-spacing:-0.033px;font-family:'Liberation Sans',sans-serif">Perspective</div>
<div class="t" style="left:475.60px;top:36.00px;color:#cdcfd2;font-size:14.5px;letter-spacing:0.263px;font-family:'Liberation Sans',sans-serif">Transform</div>
<div class="t" style="left:559.30px;top:36.00px;color:#cdcfd2;font-size:14.5px;letter-spacing:0.107px;font-family:'Liberation Sans',sans-serif">View</div>
<div class="t" style="left:9.80px;top:561.00px;color:#cdcfd2;font-size:14.5px;letter-spacing:-0.219px;font-family:'Liberation Sans',sans-serif">File</div>
<div class="t" style="left:217.80px;top:561.00px;color:#cdcfd2;font-size:14.5px;letter-spacing:-0.326px;font-family:'Liberation Sans',sans-serif">Search</div>
<div class="t" style="left:279.05px;top:561.00px;color:#cdcfd2;font-size:14.5px;letter-spacing:-0.062px;font-family:'Liberation Sans',sans-serif">Edit</div>
<div class="t" style="left:320.80px;top:561.00px;color:#cdcfd2;font-size:14.5px;letter-spacing:-0.237px;font-family:'Liberation Sans',sans-serif">Go To</div>
<div class="t" style="left:375.30px;top:561.00px;color:#cdcfd2;font-size:14.5px;letter-spacing:0.105px;font-family:'Liberation Sans',sans-serif">Help</div>
<div class="t" style="left:29.80px;top:594.00px;color:#e6e8ea;font-size:14.5px;letter-spacing:0.185px;font-family:'Liberation Sans',sans-serif">simple_water.gdshader</div>
<div class="t" style="left:9.80px;top:865.00px;color:#cdcfd2;font-size:14.5px;letter-spacing:0.661px;font-family:'Liberation Sans',sans-serif">Output</div>
<div class="t" style="left:73.05px;top:865.00px;color:#cdcfd2;font-size:14.5px;letter-spacing:0.289px;font-family:'Liberation Sans',sans-serif">Debugger</div>
<div class="t" style="left:155.55px;top:865.00px;color:#cdcfd2;font-size:14.5px;letter-spacing:0.281px;font-family:'Liberation Sans',sans-serif">Audio</div>
<div class="t" style="left:210.55px;top:865.00px;color:#cdcfd2;font-size:14.5px;letter-spacing:0.391px;font-family:'Liberation Sans',sans-serif">Animation</div>
<div class="t" style="left:294.80px;top:865.00px;color:#6aafe9;font-size:14.5px;letter-spacing:0.083px;font-family:'Liberation Sans',sans-serif">Shader Editor</div>
<div class="t" style="left:787.50px;top:863.70px;color:#9b9ea4;font-size:14.5px;letter-spacing:0.001px;font-family:'Liberation Sans',sans-serif">4.0.2.stable</div>
</body></html>
